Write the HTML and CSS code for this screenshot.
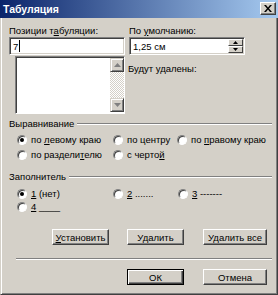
FILE: index.html
```html
<!DOCTYPE html>
<html lang="ru">
  <head>
    <meta charset="UTF-8" />
    <title>Табуляция</title>
    <link rel="stylesheet" href="styles.css">
  </head>

  <body>
    <div class="dialog">
      <header class="titlebar">
        <span class="titlebar__text">Табуляция</span>
        <span class="titlebar__close">
          <svg width="8" height="7" viewBox="0 0 8 7">
            <path d="M0 0h2l2 2.5 2-2.5h2l-3 3.5 3 3.5h-2l-2-2.5-2 2.5h-2l3-3.5z" fill="#000"/>
          </svg>
        </span>
      </header>

      <div class="client">
        <div class="tabs">
          <div class="tabs__col">
            <div class="label">Позиции т<u>а</u>буляции:</div>
            <div class="field">7<span class="field__caret"></span></div>
            <div class="listbox">
              <div class="listbox__area"></div>
              <div class="scrollbar">
                <span class="scrollbar__btn">
                  <svg width="7" height="4" viewBox="0 0 7 4"><path d="M3.5 0 7 4H0z" fill="#808080"/></svg>
                </span>
                <span class="scrollbar__track"></span>
                <span class="scrollbar__btn">
                  <svg width="7" height="4" viewBox="0 0 7 4"><path d="M0 0h7L3.5 4z" fill="#808080"/></svg>
                </span>
              </div>
            </div>
          </div>

          <div class="tabs__col">
            <div class="label">По <u>у</u>молчанию:</div>
            <div class="field field--spin">
              <span>1,25 см</span>
              <span class="spin">
                <span class="spin__btn">
                  <svg width="5" height="3" viewBox="0 0 5 3"><path d="M2.5 0 5 3H0z" fill="#000"/></svg>
                </span>
                <span class="spin__btn">
                  <svg width="5" height="3" viewBox="0 0 5 3"><path d="M0 0h5L2.5 3z" fill="#000"/></svg>
                </span>
              </span>
            </div>
            <div class="label label--note">Будут удалены:</div>
          </div>
        </div>

        <section class="group group--align">
          <div class="group__head">
            <span>Выравнивание</span>
            <span class="group__line"></span>
          </div>
          <div class="options options--align">
            <span class="option"><span class="radio radio--on"></span><span>по <u>л</u>евому краю</span></span>
            <span class="option"><span class="radio"></span><span>по центру</span></span>
            <span class="option"><span class="radio"></span><span>по <u>п</u>равому краю</span></span>
            <span class="option"><span class="radio"></span><span>по раздели<u>т</u>елю</span></span>
            <span class="option"><span class="radio"></span><span>с черто<u>й</u></span></span>
          </div>
        </section>

        <section class="group group--fill">
          <div class="group__head">
            <span>Заполнитель</span>
            <span class="group__line"></span>
          </div>
          <div class="options options--fill">
            <span class="option"><span class="radio radio--on"></span><span><u>1</u> (нет)</span></span>
            <span class="option"><span class="radio"></span><span><u>2</u> .......</span></span>
            <span class="option"><span class="radio"></span><span><u>3</u> -------</span></span>
            <span class="option"><span class="radio"></span><span><u>4</u> ____</span></span>
          </div>
        </section>

        <div class="actions">
          <button class="btn btn--set"><u>У</u>становить</button>
          <button class="btn btn--del">Удалить</button>
          <button class="btn btn--all">Удалить все</button>
        </div>

        <div class="separator"></div>

        <div class="actions actions--bottom">
          <button class="btn btn--del btn--default">ОК</button>
          <button class="btn btn--all">Отмена</button>
        </div>
      </div>
    </div>
  </body>
</html>
```

FILE: styles.css
```css
* {
  box-sizing: border-box;
}

body {
  margin: 0;
  font-family: "Liberation Sans", Arial, sans-serif;
  font-size: 9.5px;
  color: #000;
}

.dialog {
  width: 278px;
  height: 295px;
  background: #d4d0c8;
  border: 1px solid;
  border-color: #d4d0c8 #404040 #404040 #d4d0c8;
  border-top: 0;
  box-shadow: inset 1px 0 #fff, inset -1px -1px #808080;
  display: flex;
  flex-direction: column;
}

/* title bar */
.titlebar {
  height: 18px;
  margin: 0 -1px;
  padding: 0 2px 1px 3px;
  display: flex;
  align-items: center;
  justify-content: space-between;
  background: linear-gradient(to right, #0a246a, #a6caf0);
}

.titlebar__text {
  color: #fff;
  font-weight: bold;
  font-size: 10.5px;
}

.titlebar__close {
  width: 16px;
  height: 13px;
  display: flex;
  align-items: center;
  justify-content: center;
  background: #d4d0c8;
  border: 1px solid;
  border-color: #fff #404040 #404040 #fff;
  box-shadow: inset -1px -1px #808080;
}

.client {
  padding: 7px 5px 0 8px;
}

/* tab stops */
.tabs {
  display: grid;
  grid-template-columns: 116px 116px;
  column-gap: 4px;
}

.label {
  height: 12px;
  line-height: 12px;
  white-space: nowrap;
}

.label--note {
  margin-top: 8px;
  margin-left: -1px;
}

.field {
  height: 18px;
  padding-left: 3px;
  display: flex;
  align-items: center;
  background: #fff;
  border: 1px solid;
  border-color: #808080 #fff #fff #808080;
  box-shadow: inset 1px 1px #404040, inset -1px -1px #d4d0c8;
}

.field__caret {
  width: 1px;
  height: 12px;
  margin-left: 1px;
  background: #000;
}

.field--spin {
  justify-content: space-between;
  padding-right: 1px;
}

.spin {
  display: flex;
  flex-direction: column;
}

.spin__btn {
  width: 15px;
  height: 7px;
  display: flex;
  align-items: center;
  justify-content: center;
  background: #d4d0c8;
  border: 1px solid;
  border-color: #fff #404040 #404040 #fff;
}

.listbox {
  width: 110px;
  height: 58px;
  margin: 1px 0 0 6px;
  display: flex;
  background: #fff;
  border: 1px solid;
  border-color: #808080 #fff #fff #808080;
  box-shadow: inset 1px 1px #404040;
}

.listbox__area {
  flex: 1;
}

.scrollbar {
  width: 14px;
  margin: 1px 0;
  display: flex;
  flex-direction: column;
}

.scrollbar__btn {
  height: 14px;
  display: flex;
  align-items: center;
  justify-content: center;
  background: #d4d0c8;
  border: 1px solid;
  border-color: #d4d0c8 #404040 #404040 #d4d0c8;
  box-shadow: inset 1px 1px #fff, inset -1px -1px #808080;
}

.scrollbar__track {
  flex: 1;
  background: repeating-conic-gradient(#fff 0 25%, #d4d0c8 0 50%) 0 0 / 2px 2px;
}

/* groups */
.group {
  margin-top: 4px;
}

.group--fill {
  margin-top: 10px;
}

.group__head {
  height: 12px;
  display: flex;
  align-items: center;
  gap: 3px;
  line-height: 12px;
}

.group__line {
  flex: 1;
  height: 2px;
  border-top: 1px solid #808080;
  border-bottom: 1px solid #fff;
}

.options {
  display: grid;
  padding-left: 8px;
}

.options--align {
  grid-template-columns: 96px 64px auto;
  row-gap: 2px;
  margin-top: 3px;
}

.options--fill {
  grid-template-columns: 96px 65px auto;
  margin-top: 4px;
}

.option {
  height: 13px;
  display: flex;
  align-items: center;
  gap: 4px;
  white-space: nowrap;
}

.radio {
  flex: none;
  width: 10px;
  height: 10px;
  border-radius: 50%;
  display: flex;
  align-items: center;
  justify-content: center;
  background: #fff;
  border: 1px solid;
  border-color: #808080 #fff #fff #808080;
  box-shadow: inset 1px 1px #404040;
}

.radio--on::after {
  content: "";
  width: 4px;
  height: 4px;
  border-radius: 50%;
  background: #000;
}

/* buttons */
.actions {
  margin-top: 16px;
  margin-right: 5px;
  display: flex;
  justify-content: flex-end;
  gap: 18px;
}

.actions--bottom {
  margin-top: 9px;
}

.btn {
  height: 16px;
  padding: 0;
  font-family: inherit;
  font-size: 9.5px;
  color: #000;
  background: #d4d0c8;
  border: 1px solid;
  border-color: #fff #404040 #404040 #fff;
  box-shadow: inset -1px -1px #808080;
}

.btn--set {
  width: 57px;
}

.btn--del {
  width: 57px;
}

.btn--all {
  width: 64px;
  margin-left: 1px;
}

.btn--default {
  border-color: #000;
  box-shadow: inset 1px 1px #fff, inset -1px -1px #404040, inset -2px -2px #808080;
}

.separator {
  height: 2px;
  margin: 13px 0 0 7px;
  border-top: 1px solid #808080;
  border-bottom: 1px solid #fff;
}
```
